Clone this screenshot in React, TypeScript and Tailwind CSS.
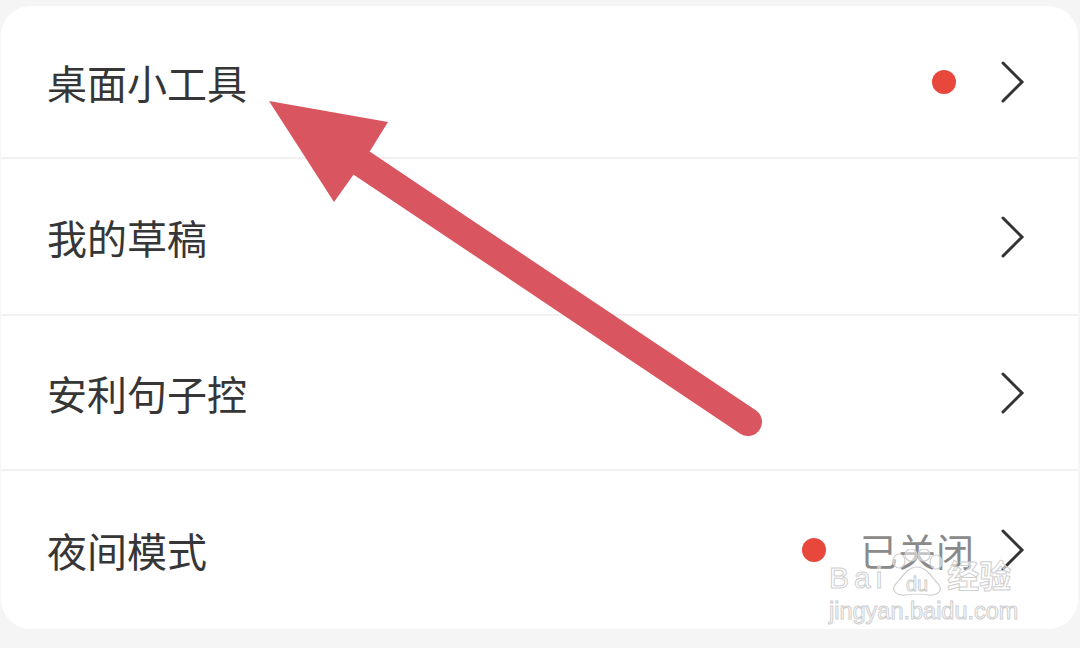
import React from "react";

function Chevron() {
  return (
    <svg width="26" height="42" viewBox="0 0 26 42" className="shrink-0">
      <path d="M3 2 L22 21 L3 40" fill="none" stroke="#333333" strokeWidth="3" strokeLinecap="round" strokeLinejoin="miter" />
    </svg>
  );
}

function Dot() {
  return <div className="w-[24px] h-[24px] rounded-full bg-[#e8483b] shrink-0" />;
}

export default function App() {
  return (
    <div className="relative w-[1080px] h-[648px] bg-[#f5f5f5] pt-[6px] pl-[1px] pr-[2px] overflow-hidden font-['Noto_Sans_CJK_SC','Noto_Sans',sans-serif]">
      <div className="bg-white rounded-[30px] h-[623px] flex flex-col">
        <div className="h-[153px] flex items-center pl-[46px] pr-[52px] border-b-2 border-[#f1f1f1] shrink-0">
          <span className="text-[40px] leading-none text-[#363636] flex-1">桌面小工具</span>
          <Dot />
          <div className="w-[44px]" />
          <Chevron />
        </div>
        <div className="h-[157px] flex items-center pl-[46px] pr-[52px] border-b-2 border-[#f1f1f1] shrink-0">
          <span className="text-[40px] leading-none text-[#363636] flex-1">我的草稿</span>
          <Chevron />
        </div>
        <div className="h-[155px] flex items-center pl-[46px] pr-[52px] border-b-2 border-[#f1f1f1] shrink-0">
          <span className="text-[40px] leading-none text-[#363636] flex-1">安利句子控</span>
          <Chevron />
        </div>
        <div className="flex-1 flex items-center pl-[46px] pr-[52px]">
          <span className="text-[40px] leading-none text-[#363636] flex-1">夜间模式</span>
          <Dot />
          <div className="w-[34px]" />
          <span className="text-[38px] leading-none text-[#8a8a8a]">已关闭</span>
          <div className="w-[26px]" />
          <Chevron />
        </div>
      </div>

      {/* red annotation arrow */}
      <svg className="absolute inset-0 pointer-events-none" width="1080" height="648" viewBox="0 0 1080 648">
        <line x1="360" y1="162" x2="748" y2="422" stroke="#d9555f" strokeWidth="28" strokeLinecap="round" />
        <polygon points="269,101 388,122 370,151 354,174 334,202" fill="#d9555f" />
      </svg>

      {/* watermark */}
      <div className="absolute left-[829px] top-[553px] flex flex-col items-start pointer-events-none font-['Liberation_Sans','Noto_Sans_CJK_SC',sans-serif]">
        <div className="flex items-end h-[40px]">
          <span className="text-[30px] leading-none text-white/60 [-webkit-text-stroke:1px_#cfcfcf] tracking-[5px]">Bai</span>
          <svg width="60" height="48" viewBox="0 0 60 48" className="mb-[-4px]">
            <g fill="rgba(255,255,255,0.5)" stroke="#d0d0d0" strokeWidth="1.2">
              <ellipse cx="12" cy="12" rx="6" ry="7" />
              <ellipse cx="24" cy="6" rx="6" ry="6" />
              <ellipse cx="37" cy="6" rx="6" ry="6" />
              <ellipse cx="49" cy="13" rx="6" ry="7" />
              <path d="M30 18 C20 18 14 30 8 36 C4 42 10 47 18 46 C24 45 36 45 42 46 C50 47 56 42 52 36 C46 30 40 18 30 18 Z" />
            </g>
            <text x="30" y="42" textAnchor="middle" fontSize="20" fontFamily="Liberation Sans, sans-serif" fill="rgba(255,255,255,0.6)" stroke="#c8c8c8" strokeWidth="0.8">du</text>
          </svg>
          <span className="text-[32px] leading-none text-white/60 [-webkit-text-stroke:1px_#cfcfcf] font-bold">经验</span>
        </div>
        <span className="mt-[7px] text-[23.5px] leading-none text-white/60 [-webkit-text-stroke:1px_#cfcfcf]">jingyan.baidu.com</span>
      </div>
    </div>
  );
}
